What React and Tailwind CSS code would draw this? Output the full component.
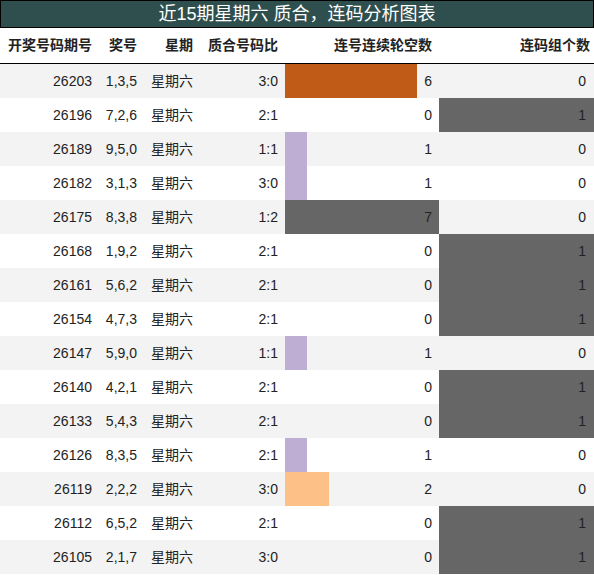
import React from 'react';

const rows = [
  ['26203', '1,3,5', '3:0', 6, 0],
  ['26196', '7,2,6', '2:1', 0, 1],
  ['26189', '9,5,0', '1:1', 1, 0],
  ['26182', '3,1,3', '3:0', 1, 0],
  ['26175', '8,3,8', '1:2', 7, 0],
  ['26168', '1,9,2', '2:1', 0, 1],
  ['26161', '5,6,2', '2:1', 0, 1],
  ['26154', '4,7,3', '2:1', 0, 1],
  ['26147', '5,9,0', '1:1', 1, 0],
  ['26140', '4,2,1', '2:1', 0, 1],
  ['26133', '5,4,3', '2:1', 0, 1],
  ['26126', '8,3,5', '2:1', 1, 0],
  ['26119', '2,2,2', '3:0', 2, 0],
  ['26112', '6,5,2', '2:1', 0, 1],
  ['26105', '2,1,7', '3:0', 0, 1],
];

// 连号轮空数 -> 颜色
const barColor = { 1: '#beaed4', 2: '#fdc086', 6: '#bf5b17', 7: '#666666' };

const font = { fontFamily: '"Liberation Sans", "Noto Sans CJK SC", sans-serif' };

export default function App() {
  return (
    <div className="w-[594px] h-[575px] bg-white text-[#222] text-[14px]" style={font}>
      <div className="h-[28px] border border-black bg-[#2f4f4f] text-white text-[18px] leading-[26px] text-center">
        近15期星期六 质合，连码分析图表
      </div>

      <div className="grid grid-cols-[99px_45px_56px_85px_154px_155px] h-[36px] border-b border-black font-bold items-center text-right">
        <div className="pr-[7px] text-left pl-[8px]">开奖号码期号</div>
        <div className="pr-[7px]">奖号</div>
        <div className="pr-[7px]">星期</div>
        <div className="pr-[7px]">质合号码比</div>
        <div className="pr-[7px]">连号连续轮空数</div>
        <div className="pr-[4px]">连码组个数</div>
      </div>

      {rows.map(([qi, num, ratio, gap, group], i) => (
        <div
          key={qi}
          className={`grid grid-cols-[99px_45px_56px_85px_154px_155px] h-[34px] items-stretch ${i % 2 === 0 ? 'bg-[#f3f3f3]' : 'bg-white'}`}
        >
          <div className="pr-[7px] text-right leading-[34px]">{qi}</div>
          <div className="pr-[7px] text-right leading-[34px]">{num}</div>
          <div className="pr-[7px] text-right leading-[34px]">星期六</div>
          <div className="pr-[7px] text-right leading-[34px]">{ratio}</div>
          <div className="relative leading-[34px] text-right pr-[7px]">
            {gap > 0 && (
              <div
                className="absolute left-0 top-0 bottom-0"
                style={{ width: gap * 22, background: barColor[gap] }}
              />
            )}
            <span className="relative">{gap}</span>
          </div>
          <div className={`pr-[8px] text-right leading-[34px] ${group ? 'bg-[#666666]' : ''}`}>{group}</div>
        </div>
      ))}
    </div>
  );
}
